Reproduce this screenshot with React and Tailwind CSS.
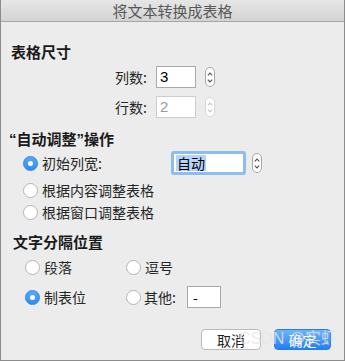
import React from "react";

const font = { fontFamily: '"Noto Sans CJK SC", "Noto Sans", sans-serif' };

function Stepper({ disabled }) {
  const c = disabled ? "#c4c4c4" : "#555";
  return (
    <div
      className={`w-[10px] h-[20px] rounded-[5px] border bg-white flex flex-col items-center justify-center gap-[3px] ${
        disabled ? "border-[#d6d6d6]" : "border-[#a8a8a8]"
      }`}
    >
      <svg width="6" height="4" viewBox="0 0 6 4">
        <path d="M0.8 3.3 L3 1 L5.2 3.3" fill="none" stroke={c} strokeWidth="1.1" />
      </svg>
      <svg width="6" height="4" viewBox="0 0 6 4">
        <path d="M0.8 0.7 L3 3 L5.2 0.7" fill="none" stroke={c} strokeWidth="1.1" />
      </svg>
    </div>
  );
}

function Radio({ checked }) {
  if (checked)
    return (
      <div className="w-[15px] h-[15px] rounded-full bg-gradient-to-b from-[#58a9fb] to-[#2f8af5] border border-[#2e84e8] flex items-center justify-center shrink-0">
        <div className="w-[5px] h-[5px] rounded-full bg-white" />
      </div>
    );
  return (
    <div className="w-[15px] h-[15px] rounded-full bg-white border border-[#b4b4b4] shrink-0" />
  );
}

const q = { fontFamily: '"Liberation Sans", sans-serif' };

export default function App() {
  return (
    <div
      className="w-[345px] h-[361px] bg-[#ececec] border-l border-r border-b border-[#8c8c8c] flex flex-col text-[14px] text-[#262626] relative overflow-hidden"
      style={font}
    >
      <div className="h-[22px] shrink-0 border-b border-[#a6a6a6] bg-gradient-to-b from-[#e6e6e6] to-[#d3d3d3] flex items-center justify-center text-[15px] text-[#585858] leading-none">
        将文本转换成表格
      </div>

      <div className="flex flex-col">
        <div className="mt-[20px] ml-[10px] h-[20px] flex items-center text-[15px] font-semibold text-[#1a1a1a]">
          表格尺寸
        </div>

        <div className="mt-[4px] ml-[114px] h-[22px] flex items-center">
          <span className="w-[36px]">列数:</span>
          <div className="ml-[5px] w-[40px] h-[22px] bg-white border border-[#a9a9a9] flex items-center pl-[3px] text-[15px] text-black" style={q}>
            3
          </div>
          <div className="ml-[9px]">
            <Stepper />
          </div>
        </div>

        <div className="mt-[8px] ml-[114px] h-[22px] flex items-center">
          <span className="w-[36px]">行数:</span>
          <div className="ml-[5px] w-[40px] h-[22px] bg-white border border-[#cdcdcd] flex items-center pl-[3px] text-[15px] text-[#9a9a9a]" style={q}>
            2
          </div>
          <div className="ml-[9px]">
            <Stepper disabled />
          </div>
        </div>

        <div className="mt-[11px] ml-[8px] h-[20px] flex items-center text-[15px] font-semibold text-[#1a1a1a]">
          <span style={q}>“</span>自动调整<span style={q}>”</span>操作
        </div>

        <div className="mt-[2px] ml-[22px] h-[24px] flex items-center">
          <Radio checked />
          <span className="ml-[4px] w-[130px]">初始列宽:</span>
          <div className="ml-[-1px] w-[75px] h-[24px] rounded-[3px] bg-[#8dbdf0] p-[3px]">
            <div className="w-full h-full bg-white flex items-center pl-[2px]">
              <span className="bg-[#b3d4fc] text-black leading-[16px] px-[1px]">自动</span>
            </div>
          </div>
          <div className="ml-[6px]">
            <Stepper />
          </div>
        </div>

        <div className="mt-[4px] ml-[22px] h-[22px] flex items-center">
          <Radio />
          <span className="ml-[4px]">根据内容调整表格</span>
        </div>

        <div className="mt-[0px] ml-[22px] h-[22px] flex items-center">
          <Radio />
          <span className="ml-[4px]">根据窗口调整表格</span>
        </div>

        <div className="mt-[9px] ml-[12px] h-[20px] flex items-center text-[15px] font-semibold text-[#1a1a1a]">
          文字分隔位置
        </div>

        <div className="mt-[5px] ml-[24px] h-[20px] flex items-center">
          <Radio />
          <span className="ml-[4px] w-[82px]">段落</span>
          <Radio />
          <span className="ml-[4px]">逗号</span>
        </div>

        <div className="mt-[9px] ml-[24px] h-[22px] flex items-center">
          <Radio checked />
          <span className="ml-[4px] w-[82px]">制表位</span>
          <Radio />
          <span className="ml-[3px] w-[43px]">其他:</span>
          <div className="w-[34px] h-[22px] bg-white border border-[#a9a9a9] flex items-center pl-[5px] text-black">
            -
          </div>
        </div>

        <div className="mt-[21px] flex justify-end pr-[13px] gap-[13px]">
          <div className="w-[60px] h-[21px] bg-white border border-[#b9b9b9] rounded-[4px] flex items-center justify-center text-[#1e1e1e] leading-none">
            取消
          </div>
          <div className="w-[57px] h-[21px] rounded-[4px] bg-gradient-to-b from-[#6db5fb] to-[#1f7ff1] border border-[#2a7de0] flex items-center justify-center text-white leading-none">
            确定
          </div>
        </div>
      </div>

      <div className="absolute left-[238px] top-[328px] text-[16px] text-[#e6e6e6] opacity-80 leading-[22px] whitespace-nowrap" style={{ fontFamily: '"Liberation Sans", "Noto Sans CJK SC", sans-serif' }}>
        CSDN @实虾
      </div>
    </div>
  );
}
